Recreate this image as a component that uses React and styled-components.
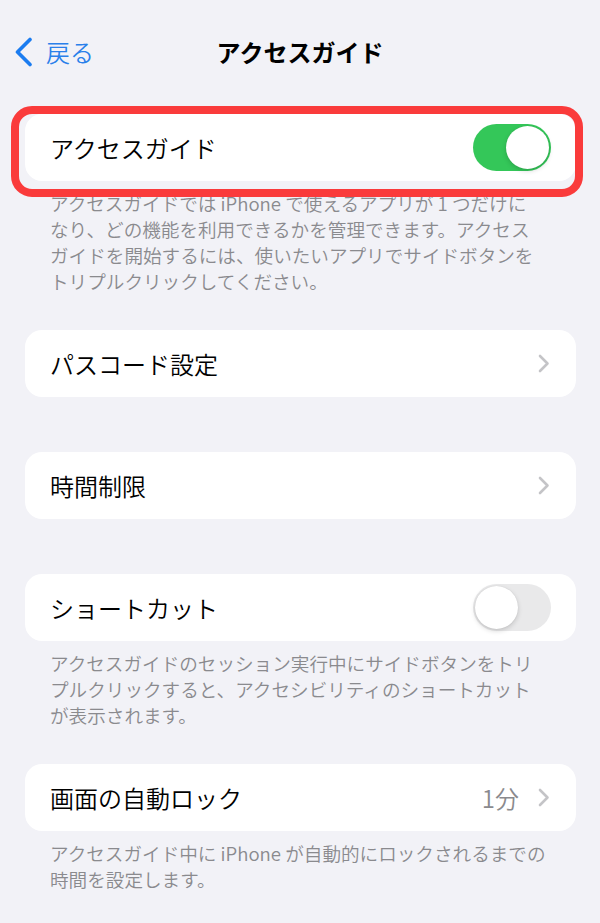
import React from "react";
import styled, { createGlobalStyle } from "styled-components";

const GlobalStyle = createGlobalStyle`
  html, body { margin: 0; padding: 0; background: #f2f2f7; }
  * { box-sizing: border-box; }
`;

const Page = styled.div`
  min-height: 923px;
  background: #f2f2f7;
  font-family: "Noto Sans CJK JP", "Noto Sans", sans-serif;
  color: #000;
  overflow: hidden;
`;

const NavBar = styled.header`
  display: grid;
  grid-template-columns: 1fr auto 1fr;
  align-items: center;
  height: 104px;
  padding: 0 14px;
`;

const BackButton = styled.div`
  display: flex;
  align-items: center;
  gap: 13px;
  color: #2a80ea;
  font-size: 24px;
  line-height: 1;
  font-weight: 350;
`;

const Title = styled.h1`
  margin: 0;
  font-size: 24px;
  font-weight: 700;
  line-height: 1;
  letter-spacing: 0;
`;

const Content = styled.main`
  display: flex;
  flex-direction: column;
  padding: 10px 24px 0 25px;
`;

const Group = styled.section`
  display: flex;
  flex-direction: column;
  margin-bottom: ${(p) => (p.$footer ? 36 : 55)}px;
`;

const Highlight = styled.div`
  position: relative;
`;

const HighlightRing = styled.div`
  position: absolute;
  top: -8px;
  bottom: -16px;
  left: -14px;
  right: -7px;
  border: 8px solid #fa3b3b;
  border-radius: 21px;
  pointer-events: none;
`;

const Card = styled.div`
  display: flex;
  align-items: center;
  height: 67px;
  padding: 0 26px 0 25px;
  background: #fff;
  border-radius: 17px;
`;

const Label = styled.span`
  flex: 1;
  font-size: 24px;
  line-height: 1;
  font-weight: 350;
`;

const Value = styled.span`
  font-size: 24px;
  line-height: 1;
  font-weight: 350;
  color: #8a8a8e;
  margin-right: 19px;
`;

const Footer = styled.p`
  margin: 9px 0 0;
  padding: 0 0 0 25px;
  font-size: 18.6px;
  line-height: 26px;
  font-weight: 350;
  color: #8a8a8e;
  white-space: nowrap;
`;

const Switch = styled.div`
  display: flex;
  justify-content: ${(p) => (p.$on ? "flex-end" : "flex-start")};
  align-items: center;
  width: 78px;
  height: 47px;
  padding: 2px;
  margin-right: -1px;
  border-radius: 24px;
  background: ${(p) => (p.$on ? "#34c759" : "#e9e9ea")};
`;

const Knob = styled.div`
  width: 43px;
  height: 43px;
  border-radius: 50%;
  background: #fff;
  box-shadow: 0 2px 5px rgba(0, 0, 0, 0.16), 0 0 1px rgba(0, 0, 0, 0.12);
`;

const BackChevron = () => (
  <svg width="19" height="30" viewBox="0 0 19 30" fill="none">
    <path
      d="M16 2.5 L3.5 15 L16 27.5"
      stroke="#1b7cf0"
      strokeWidth="3.6"
      strokeLinecap="round"
      strokeLinejoin="round"
    />
  </svg>
);

const Chevron = () => (
  <svg width="12" height="19" viewBox="0 0 12 19" fill="none">
    <path
      d="M2 2 L9.5 9.5 L2 17"
      stroke="#c4c4c7"
      strokeWidth="2.6"
      strokeLinecap="round"
      strokeLinejoin="round"
    />
  </svg>
);

export default function App() {
  return (
    <Page>
      <GlobalStyle />
      <NavBar>
        <BackButton>
          <BackChevron />
          <span>戻る</span>
        </BackButton>
        <Title>アクセスガイド</Title>
        <div />
      </NavBar>
      <Content>
        <Group $footer>
          <Highlight>
            <Card>
              <Label>アクセスガイド</Label>
              <Switch $on>
                <Knob />
              </Switch>
            </Card>
            <HighlightRing />
          </Highlight>
          <Footer>
            アクセスガイドでは iPhone で使えるアプリが 1 つだけに
            <br />
            なり、どの機能を利用できるかを管理できます。アクセス
            <br />
            ガイドを開始するには、使いたいアプリでサイドボタンを
            <br />
            トリプルクリックしてください。
          </Footer>
        </Group>

        <Group>
          <Card>
            <Label>パスコード設定</Label>
            <Chevron />
          </Card>
        </Group>

        <Group>
          <Card>
            <Label>時間制限</Label>
            <Chevron />
          </Card>
        </Group>

        <Group $footer>
          <Card>
            <Label>ショートカット</Label>
            <Switch>
              <Knob />
            </Switch>
          </Card>
          <Footer>
            アクセスガイドのセッション実行中にサイドボタンをトリ
            <br />
            プルクリックすると、アクセシビリティのショートカット
            <br />
            が表示されます。
          </Footer>
        </Group>

        <Group $footer>
          <Card>
            <Label>画面の自動ロック</Label>
            <Value>1分</Value>
            <Chevron />
          </Card>
          <Footer>
            アクセスガイド中に iPhone が自動的にロックされるまでの
            <br />
            時間を設定します。
          </Footer>
        </Group>
      </Content>
    </Page>
  );
}
